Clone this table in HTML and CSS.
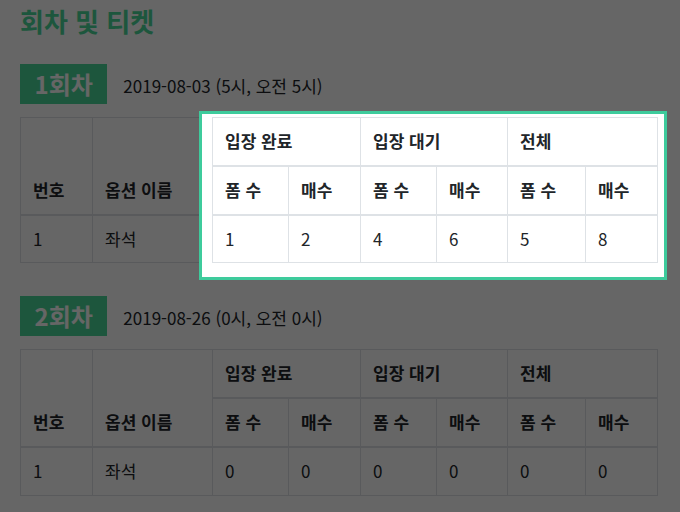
FILE: index.html
```html
<!DOCTYPE html>
<html lang="ko">
<head>
<meta charset="utf-8">
<title>회차 및 티켓</title>
<link rel="stylesheet" href="styles.css">
</head>
<body>
<main class="page">
  <h2 class="title">회차 및 티켓</h2>

  <section class="round">
    <div class="round-head">
      <span class="badge">1회차</span>
      <span class="date">2019-08-03 (5시, 오전 5시)</span>
    </div>
    <div class="table-wrap">
      <table class="tickets">
        <colgroup>
          <col class="c-no"><col class="c-name"><col class="c-a"><col class="c-b"><col class="c-a"><col class="c-d"><col class="c-e"><col class="c-f">
        </colgroup>
        <thead>
          <tr>
            <th rowspan="2">번호</th>
            <th rowspan="2">옵션 이름</th>
            <th colspan="2" class="lift">입장 완료</th>
            <th colspan="2" class="lift">입장 대기</th>
            <th colspan="2" class="lift end">전체</th>
          </tr>
          <tr class="sub">
            <th class="lift">폼 수</th>
            <th class="lift">매수</th>
            <th class="lift">폼 수</th>
            <th class="lift">매수</th>
            <th class="lift">폼 수</th>
            <th class="lift end">매수</th>
          </tr>
        </thead>
        <tbody>
          <tr>
            <td>1</td>
            <td>좌석</td>
            <td class="lift">1</td>
            <td class="lift">2</td>
            <td class="lift">4</td>
            <td class="lift">6</td>
            <td class="lift">5</td>
            <td class="lift end">8</td>
          </tr>
        </tbody>
      </table>
      <div class="highlight" aria-hidden="true"></div>
    </div>
  </section>

  <section class="round">
    <div class="round-head">
      <span class="badge">2회차</span>
      <span class="date">2019-08-26 (0시, 오전 0시)</span>
    </div>
    <div class="table-wrap">
      <table class="tickets">
        <colgroup>
          <col class="c-no"><col class="c-name"><col class="c-a"><col class="c-b"><col class="c-a"><col class="c-d"><col class="c-e"><col class="c-f">
        </colgroup>
        <thead>
          <tr>
            <th rowspan="2">번호</th>
            <th rowspan="2">옵션 이름</th>
            <th colspan="2">입장 완료</th>
            <th colspan="2">입장 대기</th>
            <th colspan="2" class="end">전체</th>
          </tr>
          <tr class="sub">
            <th>폼 수</th>
            <th>매수</th>
            <th>폼 수</th>
            <th>매수</th>
            <th>폼 수</th>
            <th class="end">매수</th>
          </tr>
        </thead>
        <tbody>
          <tr>
            <td>1</td>
            <td>좌석</td>
            <td>0</td>
            <td>0</td>
            <td>0</td>
            <td>0</td>
            <td>0</td>
            <td class="end">0</td>
          </tr>
        </tbody>
      </table>
    </div>
  </section>
</main>
<div class="dim" aria-hidden="true"></div>
</body>
</html>
```

FILE: styles.css
```css
* { box-sizing: border-box; }
html, body { margin: 0; }
body {
  background: #fff;
  font-family: "Noto Sans CJK KR", "Noto Sans", sans-serif;
  color: #212529;
  font-size: 17px;
}
.page { padding: 6px 20px 20px; }
.title {
  margin: 0;
  font-size: 26px;
  line-height: 30px;
  font-weight: 700;
  color: #4ad898;
}
.round { margin-top: 28px; }
.round + .round { margin-top: 33px; }
.round-head {
  display: flex;
  align-items: center;
  gap: 16px;
  margin-bottom: 13px;
}
.badge {
  background: #4ad898;
  color: #fff;
  font-size: 24px;
  font-weight: 700;
  line-height: 40px;
  padding: 0 14.5px;
}
.date {
  font-size: 17px;
  line-height: 24px;
  padding-top: 4px;
}
.table-wrap { position: relative; }
.tickets {
  table-layout: fixed;
  width: 638px;
  border-collapse: separate;
  border-spacing: 0;
}
.c-no { width: 72px; }
.c-name { width: 120px; }
.c-a { width: 76px; }
.c-b { width: 72px; }
.c-d { width: 71px; }
.c-e { width: 78px; }
.c-f { width: 73px; }
.tickets th, .tickets td {
  border: 0 solid #dee2e6;
  border-left-width: 1px;
  border-top-width: 1px;
  padding: 12px;
  text-align: left;
  line-height: 22.75px;
  font-size: 17px;
}
.tickets th { font-weight: 700; vertical-align: bottom; }
.tickets td { font-weight: 400; vertical-align: middle; }
.tickets .sub th, .tickets tbody td { border-top-width: 2px; }
.tickets tbody td { border-bottom-width: 1px; }
.tickets .end { border-right-width: 1px; }
.lift { position: relative; z-index: 12; }
.highlight {
  position: absolute;
  left: 179px;
  top: -6px;
  width: 468px;
  height: 169px;
  border: 3px solid #3ecb9c;
  background: #fff;
  z-index: 11;
}
.dim {
  position: fixed;
  inset: 0;
  background: rgba(0, 0, 0, 0.6);
  z-index: 10;
}
```
